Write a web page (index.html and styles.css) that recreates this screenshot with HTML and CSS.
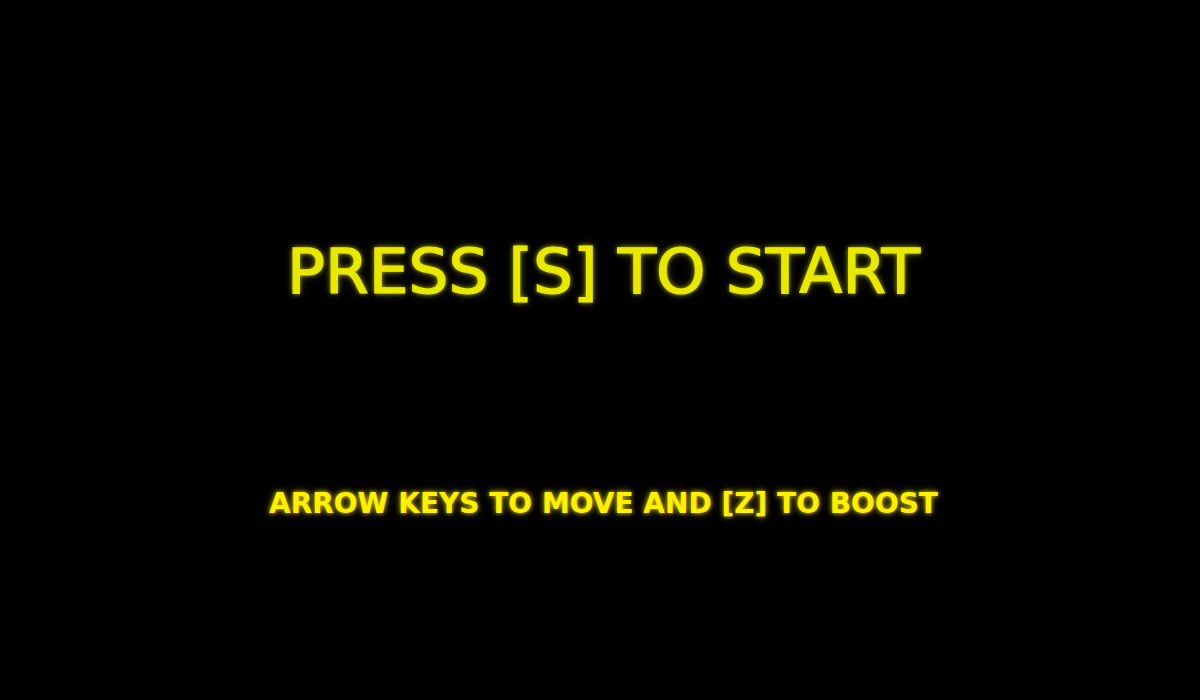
FILE: index.html
```html
<!DOCTYPE html>
<html>
<head>
<meta charset="utf-8">
<link rel="stylesheet" href="styles.css">
</head>
<body>
<main class="screen">
  <h1 class="title">PRESS [S] TO START</h1>
  <p class="hint">ARROW KEYS TO MOVE AND [Z] TO BOOST</p>
</main>
</body>
</html>
```
FILE: styles.css
```css
html, body {
  margin: 0;
  padding: 0;
  background: #000;
  width: 100%;
  height: 100%;
  overflow: hidden;
}
.screen {
  height: 700px;
  display: flex;
  flex-direction: column;
  align-items: center;
  padding-top: 235px;
  padding-left: 7px;
  box-sizing: border-box;
  gap: 179px;
  font-family: "DejaVu Sans", Verdana, sans-serif;
}
.title {
  margin: 0;
  font-size: 63px;
  font-weight: normal;
  line-height: normal;
  color: #e8e800;
  -webkit-text-stroke: 1.2px #e8e800;
  text-shadow: 0 0 4px rgba(230, 230, 0, 0.8), 0 0 8px rgba(200, 200, 0, 0.5);
  white-space: nowrap;
}
.hint {
  margin: 0;
  font-size: 28px;
  font-weight: bold;
  line-height: normal;
  color: #fff000;
  text-shadow: 0 0 4px rgba(255, 230, 0, 0.8), 0 0 8px rgba(220, 200, 0, 0.5);
  white-space: nowrap;
}
```
